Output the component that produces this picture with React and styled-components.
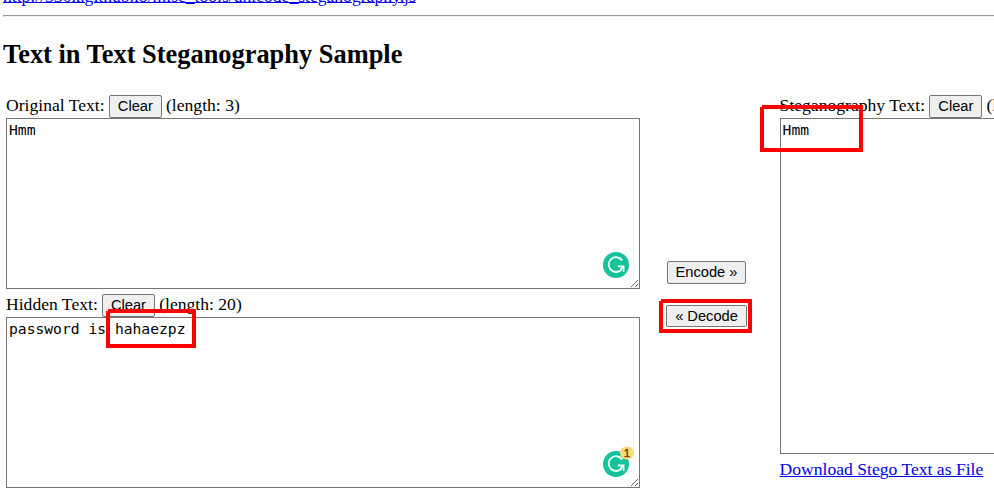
import React from "react";
import styled, { createGlobalStyle } from "styled-components";

const GlobalStyle = createGlobalStyle`
  html, body { margin: 0; background: #fff; overflow: hidden; }
  * { box-sizing: border-box; }
`;

const Page = styled.main`
  position: relative;
  width: 994px;
  height: 504px;
  overflow: hidden;
  padding-left: 3px;
  color: #000;
  font-family: "Liberation Serif", "Times New Roman", serif;
  font-size: 17.6px;
  line-height: 20px;
`;

const SourceLine = styled.div`
  height: 15px;
  display: flex;
  align-items: flex-end;
  padding-bottom: 9px;
  white-space: nowrap;
`;

const Link = styled.a`
  color: #0000ee;
  text-decoration: underline;
  text-decoration-thickness: 1px;
  text-underline-offset: ${(p) => p.$offset ?? 1}px;
`;

const Rule = styled.hr`
  margin: 0;
  height: 2px;
  border: 0;
  border-top: 1px solid #9a9a9a;
  border-bottom: 1px solid #eeeeee;
  border-left: 1px solid #9a9a9a;
`;

const Title = styled.h2`
  margin: 22px 0 24px;
  font-size: 26.4px;
  line-height: 30px;
  font-weight: bold;
`;

const Columns = styled.div`
  display: grid;
  grid-template-columns: 634px 139.6px 634px;
  padding-left: 3px;
`;

const Column = styled.section`
  display: flex;
  flex-direction: column;
  align-items: flex-start;
`;

const Controls = styled(Column)`
  align-items: center;
  padding-top: 168px;
  padding-right: 6.6px;
  gap: 21px;
`;

const Field = styled.div`
  position: relative;
  height: ${(p) => p.$height}px;
`;

const Label = styled.div`
  display: flex;
  align-items: flex-start;
  gap: 4.2px;
  height: 25px;
  padding-top: 2px;
  white-space: nowrap;
`;

const Button = styled.button`
  height: ${(p) => p.$height || 23}px;
  width: ${(p) => p.$width}px;
  padding: 0;
  border: 1px solid #767676;
  border-radius: 2px;
  background: #efefef;
  color: #000;
  font: 14.667px/17px "Liberation Sans", Arial, sans-serif;
`;

const TextArea = styled.textarea`
  display: block;
  width: 634px;
  height: ${(p) => p.$height}px;
  margin: 0;
  padding: 2px;
  border: 1px solid #767676;
  border-radius: 0;
  background: #fff;
  color: #000;
  font: 14.667px/17px "DejaVu Sans Mono", monospace;
  resize: both;
  outline: none;
`;

const Assistant = styled.svg`
  position: absolute;
  right: 0;
  bottom: 13px;
  width: 38px;
  height: 30px;
  overflow: visible;
`;

const Mark = styled.div`
  position: absolute;
  left: ${(p) => p.$x}px;
  top: ${(p) => p.$y}px;
  width: ${(p) => p.$w}px;
  height: ${(p) => p.$h}px;
  border: 4px solid #ff0000;
  clip-path: polygon(2px 0, 100% 0, 100% 100%, 0 100%, 0 2px, 2px 2px);
  pointer-events: none;
`;

function AssistantIcon({ count }) {
  return (
    <Assistant viewBox="0 0 38 30">
      <circle cx="14" cy="16" r="13" fill="#15c39a" />
      <path d="M20.2 11.4A7.4 7.4 0 1 0 19.6 20.6" fill="none" stroke="#fff" strokeWidth="1.8" />
      <path d="M15.8 17.3H21.6V22.8M21.4 17.5L18.6 20.8" fill="none" stroke="#fff" strokeWidth="1.7" />
      {count && (
        <>
          <rect x="18" y="-1.5" width="14" height="13" rx="6.5" fill="#ffdb7d" />
          <text x="25" y="9" textAnchor="middle" fontFamily="Liberation Sans" fontSize="11.5" fill="#5c4300" stroke="#5c4300" strokeWidth=".4">
            {count}
          </text>
        </>
      )}
    </Assistant>
  );
}

function TextField({ label, length, value, height, areaHeight, assistant, count }) {
  return (
    <Field $height={height}>
      <Label>
        <span>{label}</span>
        <Button $width={53}>Clear</Button>
        <span>(length: {length})</span>
      </Label>
      <TextArea $height={areaHeight} defaultValue={value} spellCheck={false} />
      {assistant && <AssistantIcon count={count} />}
    </Field>
  );
}

export default function App() {
  return (
    <>
      <GlobalStyle />
      <Page>
        <SourceLine>
          <Link href="#source" $offset={0}>http://330k.github.io/misc_tools/unicode_steganography.js</Link>
        </SourceLine>
        <Rule />
        <Title>Text in Text Steganography Sample</Title>
        <Columns>
          <Column>
            <TextField label="Original Text:" length={3} value="Hmm" height={199} areaHeight={171} assistant />
            <TextField label="Hidden Text:" length={20} value="password is hahaezpz" height={199} areaHeight={171} assistant count="1" />
          </Column>
          <Controls>
            <Button $width={79}>Encode »</Button>
            <Button $width={81} $height={22}>« Decode</Button>
          </Controls>
          <Column>
            <TextField label="Steganography Text:" length={78} value="Hmm" height={366} areaHeight={336} />
            <Link href="#download">Download Stego Text as File</Link>
          </Column>
        </Columns>
        <Mark $x={106} $y={309} $w={90} $h={39} />
        <Mark $x={659} $y={299} $w={93} $h={34} />
        <Mark $x={760} $y={105} $w={103} $h={47} />
      </Page>
    </>
  );
}
